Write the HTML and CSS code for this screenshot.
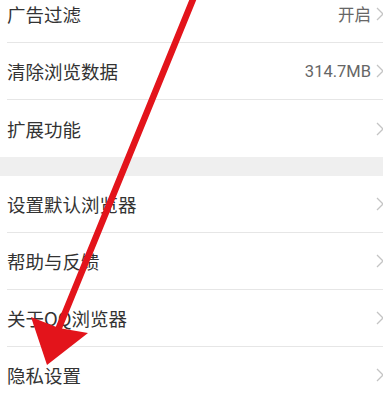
FILE: index.html
```html
<!DOCTYPE html>
<html lang="zh-CN">
<head>
<meta charset="utf-8">
<title>设置</title>
<link rel="stylesheet" href="styles.css">
</head>
<body>
<div class="page">
  <div class="group group-first">
    <div class="row"><span class="label">广告过滤</span><span class="value">开启</span><svg class="chev" viewBox="0 0 8 14"><path d="M1 1 L7 7 L1 13"/></svg></div>
    <div class="row"><span class="label">清除浏览数据</span><span class="value">314.7MB</span><svg class="chev" viewBox="0 0 8 14"><path d="M1 1 L7 7 L1 13"/></svg></div>
    <div class="row row-last"><span class="label">扩展功能</span><svg class="chev" viewBox="0 0 8 14"><path d="M1 1 L7 7 L1 13"/></svg></div>
  </div>
  <div class="band"></div>
  <div class="group">
    <div class="row"><span class="label">设置默认浏览器</span><svg class="chev" viewBox="0 0 8 14"><path d="M1 1 L7 7 L1 13"/></svg></div>
    <div class="row"><span class="label">帮助与反馈</span><svg class="chev" viewBox="0 0 8 14"><path d="M1 1 L7 7 L1 13"/></svg></div>
    <div class="row"><span class="label">关于QQ浏览器</span><svg class="chev" viewBox="0 0 8 14"><path d="M1 1 L7 7 L1 13"/></svg></div>
    <div class="row"><span class="label">隐私设置</span><svg class="chev" viewBox="0 0 8 14"><path d="M1 1 L7 7 L1 13"/></svg></div>
  </div>
  <svg class="arrow" viewBox="0 0 383 403" width="383" height="403">
    <line x1="196" y1="-8" x2="58" y2="330" stroke="#e3141b" stroke-width="6.5" stroke-linecap="round"/>
    <polygon points="47,365 31,317 59,328 88,333" fill="#e3141b"/>
  </svg>
</div>
</body>
</html>
```

FILE: styles.css
```css
html, body {
  margin: 0;
  padding: 0;
  background: #ffffff;
  overflow: hidden;
}
.page {
  position: relative;
  width: 390px;
  height: 403px;
  overflow: hidden;
  font-family: "Noto Sans CJK SC", "Noto Sans", sans-serif;
}
.group {
  padding-left: 7px;
  background: #ffffff;
}
.group-first {
  margin-top: -14px;
}
.row {
  box-sizing: border-box;
  height: 57px;
  display: flex;
  align-items: center;
  border-bottom: 1px solid #e6e6e6;
  padding-right: 6px;
}
.row-last {
  border-bottom: none;
}
.label {
  flex: 1;
  font-size: 18.5px;
  color: #333333;
}
.value {
  font-size: 16.5px;
  color: #666666;
  margin-right: 5px;
  font-family: Roboto, "Noto Sans CJK SC", sans-serif;
}
.chev {
  width: 8px;
  height: 14px;
  flex: none;
}
.chev path {
  fill: none;
  stroke: #c4c4c4;
  stroke-width: 1.3;
}
.band {
  height: 19px;
  background: #efefef;
}
.arrow {
  position: absolute;
  left: 0;
  top: 0;
  pointer-events: none;
}
```
